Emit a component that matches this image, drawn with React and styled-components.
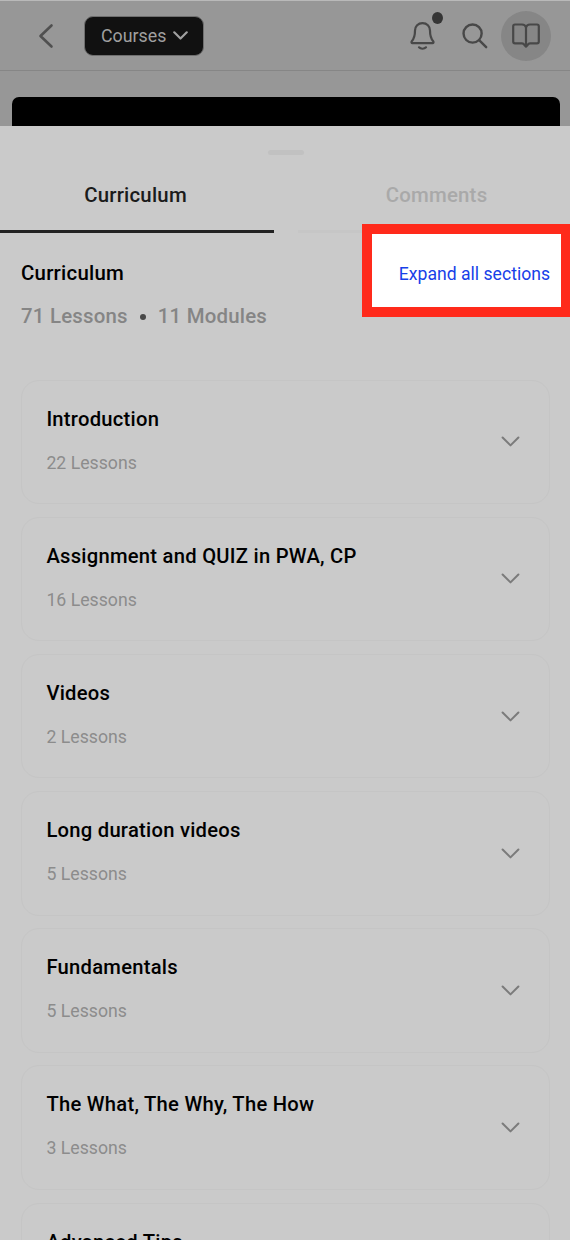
import React from 'react';
import styled, { createGlobalStyle } from 'styled-components';

const GlobalStyle = createGlobalStyle`
  * { box-sizing: border-box; }
  body { margin: 0; background: #cacaca; }
  button { font: inherit; border: 0; padding: 0; background: none; letter-spacing: inherit; }
`;

const Screen = styled.main`
  width: 570px;
  height: 1240px;
  overflow: hidden;
  background: #979797;
  font-family: Roboto, sans-serif;
  color: #000;
  white-space: nowrap;
`;

const Header = styled.header`
  height: 71px;
  display: flex;
  align-items: center;
  padding: 0 19.5px 0 38px;
  border-top: 1px solid #b9b9b9;
  border-bottom: 1px solid #868686;
`;

const BackButton = styled.button`
  display: flex;
  width: 46px;
`;

const CoursePicker = styled.button`
  display: flex;
  align-items: center;
  gap: 7px;
  width: 120px;
  height: 40px;
  padding-left: 16px;
  border: 1px solid #6f6f6f;
  border-radius: 9px;
  background: #111;
  color: #a0a0a0;
  font-size: 17.8px;
`;

const Actions = styled.nav`
  display: flex;
  align-items: center;
  margin-left: auto;
`;

const BellButton = styled.button`
  position: relative;
  display: flex;
  margin-right: 27px;
`;

const UnreadDot = styled.span`
  position: absolute;
  top: -10px;
  right: -8px;
  width: 11px;
  height: 12px;
  border-radius: 50%;
  background: #353535;
`;

const SearchButton = styled.button`
  display: flex;
  margin-right: 12.5px;
`;

const BookButton = styled.button`
  display: flex;
  align-items: center;
  justify-content: center;
  width: 50px;
  height: 50px;
  border-radius: 50%;
  background: #868686;
`;

const VideoPreview = styled.div`
  height: 29px;
  margin: 26px 10px 0 12px;
  border-radius: 7px 7px 0 0;
  background: #000;
`;

const Sheet = styled.section`
  height: 1114px;
  overflow: hidden;
  background: #cacaca;
`;

const Handle = styled.div`
  width: 36px;
  height: 5px;
  margin: 24px auto 0 268px;
  border-radius: 3px;
  background: #c1c1c1;
`;

const Tabs = styled.div`
  display: grid;
  grid-template-columns: 274px 274px;
  column-gap: 24px;
  height: 78px;
`;

const Tab = styled.button`
  padding-top: 5px;
  padding-right: ${(p) => (p.$active ? '3px' : '0')};
  padding-left: ${(p) => (p.$active ? '0' : '3px')};
  border-bottom: ${(p) => (p.$active ? '3px solid #222' : '3px solid #c6c6c6')};
  color: ${(p) => (p.$active ? '#1b1b1b' : '#a9a9a9')};
  font-size: 20.4px;
  font-weight: 500;
  letter-spacing: 0.22px;
`;

const Summary = styled.div`
  display: flex;
  justify-content: space-between;
  height: 146.5px;
  padding: 28px 20px 0 21px;
`;

const Heading = styled.h1`
  margin: 0;
  font-size: 20.4px;
  line-height: 24px;
  font-weight: 500;
  letter-spacing: 0.25px;
`;

const Totals = styled.div`
  display: flex;
  align-items: center;
  margin-top: 19px;
  color: #858585;
  font-size: 20.4px;
  line-height: 24px;
  font-weight: 500;
  letter-spacing: 0.22px;
`;

const Bullet = styled.span`
  width: 6px;
  height: 6px;
  margin: 2px 12px 0;
  border-radius: 50%;
  background: #484848;
`;

const ExpandArea = styled.div`
  position: relative;
  height: 24px;
`;

const Spotlight = styled.div`
  position: absolute;
  top: -37px;
  right: -20px;
  width: 208px;
  height: 93px;
  border: 10px solid #ff2a1b;
  border-right-width: 9px;
  background: #fff;
`;

const ExpandButton = styled.button`
  position: relative;
  color: #1740e8;
  font-size: 17.6px;
  line-height: 26px;
`;

const Modules = styled.div`
  display: flex;
  flex-direction: column;
  gap: 12.7px;
  padding: 0 20px 0 21.4px;
`;

const ModuleCard = styled.article`
  flex: none;
  display: flex;
  align-items: center;
  justify-content: space-between;
  height: 124.5px;
  padding: 0 29px 0 24px;
  border: 1px solid #c5c5c5;
  border-radius: 18px;
`;

const ModuleTitle = styled.h2`
  margin: 1.6px 0 0;
  font-size: 20.2px;
  line-height: 24px;
  font-weight: 500;
  letter-spacing: 0.26px;
`;

const LessonCount = styled.p`
  margin: 20px 0 4px;
  color: #8c8c8c;
  font-size: 17.7px;
  line-height: 24px;
`;

const Chevron = ({ width, height, color, stroke }) => (
  <svg width={width} height={height} viewBox="0 0 18 10" fill="none" stroke={color} strokeWidth={stroke} strokeLinecap="round" strokeLinejoin="round">
    <path d="M1.5 1.2 9 8.7l7.5-7.5" />
  </svg>
);

const modules = [
  ['Introduction', 22],
  ['Assignment and QUIZ in PWA, CP', 16],
  ['Videos', 2],
  ['Long duration videos', 5],
  ['Fundamentals', 5],
  ['The What, The Why, The How', 3],
  ['Advanced Tips', 4],
];

export default function App() {
  return (
    <>
      <GlobalStyle />
      <Screen>
        <Header>
          <BackButton aria-label="Back">
            <svg width="16" height="26" viewBox="0 0 16 26" fill="none" stroke="#505050" strokeWidth="2.6" strokeLinecap="round" strokeLinejoin="round">
              <path d="M13.500 2.500 2.500 13l11 10.500" />
            </svg>
          </BackButton>
          <CoursePicker>
            Courses
            <Chevron width={15} height={9} color="#a0a0a0" stroke={2.6} />
          </CoursePicker>
          <Actions>
            <BellButton aria-label="Notifications">
              <svg width="25" height="28" viewBox="0 0 25 28" fill="none" stroke="#484848" strokeWidth="2.2" strokeLinecap="round" strokeLinejoin="round">
                <path d="M12.5 1.2c-4.4 0-7.5 3.2-7.5 7.4 0 6-1.5 8.8-3.2 10.700-.7.8-.3 1.800.7 1.800h20c1 0 1.400-1 .7-1.800C21.500 17.400 20 14.600 20 8.600c0-4.200-3.100-7.400-7.500-7.400Z" />
                <path d="M9 25.300c1.700 1.900 5.300 1.900 7 0" />
              </svg>
              <UnreadDot />
            </BellButton>
            <SearchButton aria-label="Search">
              <svg width="26" height="26" viewBox="0 0 27 27" fill="none" stroke="#484848" strokeWidth="2.500" strokeLinecap="round">
                <circle cx="11" cy="11" r="9.400" />
                <path d="m17.800 17.800 7.300 7.300" />
              </svg>
            </SearchButton>
            <BookButton aria-label="Library">
              <svg width="28" height="26" viewBox="0 0 28 26" fill="none" stroke="#484848" strokeWidth="2.200" strokeLinecap="round" strokeLinejoin="round">
                <path d="M14 4.500v19.200M14 4.500C13.500 2.300 11.800 1.500 10 1.500H3Q1.200 1.500 1.200 3.300v15.200q0 1.800 1.800 1.800h7c1.200 0 1.700.4 2 1.300l2 2.100 2-2.100c.3-.9.8-1.300 2-1.300h7q1.800 0 1.800-1.800V3.300Q26.800 1.500 25 1.500h-7c-1.800 0-3.500.8-4 3Z" />
              </svg>
            </BookButton>
          </Actions>
        </Header>
        <VideoPreview />
        <Sheet>
          <Handle />
          <Tabs>
            <Tab $active>Curriculum</Tab>
            <Tab>Comments</Tab>
          </Tabs>
          <Summary>
            <div>
              <Heading>Curriculum</Heading>
              <Totals>
                <span>71 Lessons</span>
                <Bullet />
                <span>11 Modules</span>
              </Totals>
            </div>
            <ExpandArea>
              <Spotlight />
              <ExpandButton>Expand all sections</ExpandButton>
            </ExpandArea>
          </Summary>
          <Modules>
            {modules.map(([title, count]) => (
              <ModuleCard key={title}>
                <div>
                  <ModuleTitle>{title}</ModuleTitle>
                  <LessonCount>{count} Lessons</LessonCount>
                </div>
                <Chevron width={19} height={11} color="#7b7b7b" stroke={1.9} />
              </ModuleCard>
            ))}
          </Modules>
        </Sheet>
      </Screen>
    </>
  );
}
